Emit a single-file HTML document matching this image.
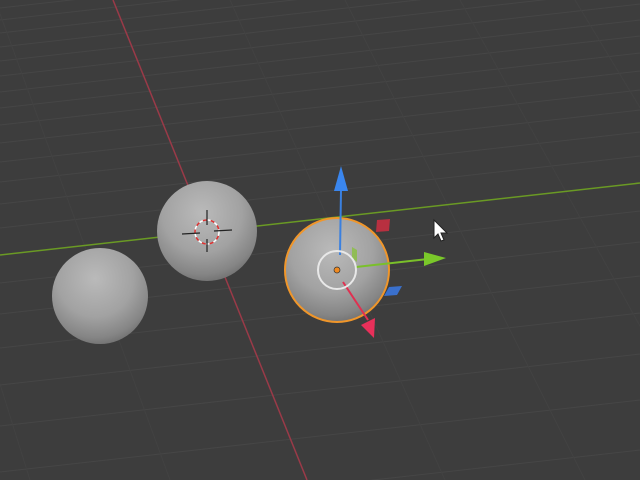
<!DOCTYPE html>
<html><head><meta charset="utf-8"><style>html,body{margin:0;padding:0;background:#3d3d3d;overflow:hidden;width:640px;height:480px}svg{display:block}</style></head>
<body>
<svg width="640" height="480" viewBox="0 0 640 480" xmlns="http://www.w3.org/2000/svg">
<defs>
<radialGradient id="sph" cx="0.45" cy="0.32" r="0.72">
<stop offset="0" stop-color="#bababa"/>
<stop offset="0.55" stop-color="#a2a2a2"/>
<stop offset="0.85" stop-color="#858585"/>
<stop offset="1" stop-color="#6c6c6c"/>
</radialGradient>
</defs>
<rect width="640" height="480" fill="#3d3d3d"/>
<g stroke="#464646" stroke-width="1" fill="none">
<line x1="0" y1="8" x2="640" y2="-64"/>
<line x1="0" y1="20" x2="640" y2="-52"/>
<line x1="0" y1="33" x2="640" y2="-39"/>
<line x1="0" y1="47" x2="640" y2="-25"/>
<line x1="0" y1="61" x2="640" y2="-11"/>
<line x1="0" y1="76" x2="640" y2="4"/>
<line x1="0" y1="92" x2="640" y2="20"/>
<line x1="0" y1="108" x2="640" y2="36"/>
<line x1="0" y1="125" x2="640" y2="53"/>
<line x1="0" y1="143" x2="640" y2="71"/>
<line x1="0" y1="162" x2="640" y2="90"/>
<line x1="0" y1="182" x2="640" y2="110"/>
<line x1="0" y1="204" x2="640" y2="132"/>
<line x1="0" y1="228" x2="640" y2="156"/>
<line x1="0" y1="283" x2="640" y2="211"/>
<line x1="0" y1="314" x2="640" y2="242"/>
<line x1="0" y1="348" x2="640" y2="276"/>
<line x1="0" y1="385" x2="640" y2="313"/>
<line x1="0" y1="426" x2="640" y2="354"/>
<line x1="0" y1="472" x2="640" y2="400"/>
<line x1="0" y1="522" x2="640" y2="450"/>
<line x1="0" y1="578" x2="640" y2="506"/>
</g>
<g stroke="#424242" stroke-width="1">
<line x1="-120" y1="0" x2="30" y2="480"/>
<line x1="-5" y1="0" x2="170" y2="480"/>
<line x1="230" y1="0" x2="445" y2="480"/>
<line x1="345" y1="0" x2="585" y2="480"/>
<line x1="460" y1="0" x2="725" y2="480"/>
<line x1="575" y1="0" x2="865" y2="480"/>
</g>
<line x1="113" y1="0" x2="307" y2="480" stroke="#9a3a48" stroke-width="1.5"/>
<line x1="0" y1="255" x2="640" y2="183" stroke="#6a9a24" stroke-width="1.5"/>
<circle cx="100" cy="296" r="48" fill="url(#sph)"/>
<circle cx="207" cy="231" r="50" fill="url(#sph)"/>
<circle cx="337" cy="270" r="52" fill="url(#sph)"/>
<circle cx="337" cy="270" r="52" fill="none" stroke="#f0962a" stroke-width="2"/>
<circle cx="207" cy="232" r="12" fill="none" stroke="#fff" stroke-width="1.5" stroke-dasharray="4 4"/>
<circle cx="207" cy="232" r="12" fill="none" stroke="#e03030" stroke-width="1.5" stroke-dasharray="4 4" stroke-dashoffset="4"/>
<g stroke="#222" stroke-width="1.2">
<line x1="182" y1="234" x2="200" y2="233"/><line x1="214" y1="231" x2="232" y2="230"/>
<line x1="207" y1="210" x2="207" y2="225"/><line x1="207" y1="239" x2="207" y2="252"/>
</g>
<line x1="340" y1="255" x2="341" y2="190" stroke="#3a80e0" stroke-width="2"/>
<polygon points="341,166 348,191 334,191" fill="#3a86ee"/>
<line x1="356" y1="267" x2="428" y2="259" stroke="#7ac02a" stroke-width="2"/>
<polygon points="446,258 424,252 424,266" fill="#7ac82a"/>
<line x1="343" y1="282" x2="368" y2="320" stroke="#e03050" stroke-width="2"/>
<polygon points="374,338 361,325 375,318" fill="#e8305a"/>
<polygon points="377,220 390,219 389,231 376,232" fill="#b83040"/>
<polygon points="389,287 402,286 397,295 384,296" fill="#3a70cc"/>
<polygon points="352,247 357,250 357,262 352,258" fill="#8ac040" opacity="0.8"/>
<circle cx="337" cy="270" r="19" fill="none" stroke="#e8e8e8" stroke-width="2"/>
<circle cx="337" cy="270" r="3" fill="#f08a20" stroke="#333" stroke-width="0.7"/>
<polygon points="434,220 434,238 438,234 441,241 444,240 441,233 447,233" fill="#fff" stroke="#222" stroke-width="1"/>
</svg>
</body></html>
